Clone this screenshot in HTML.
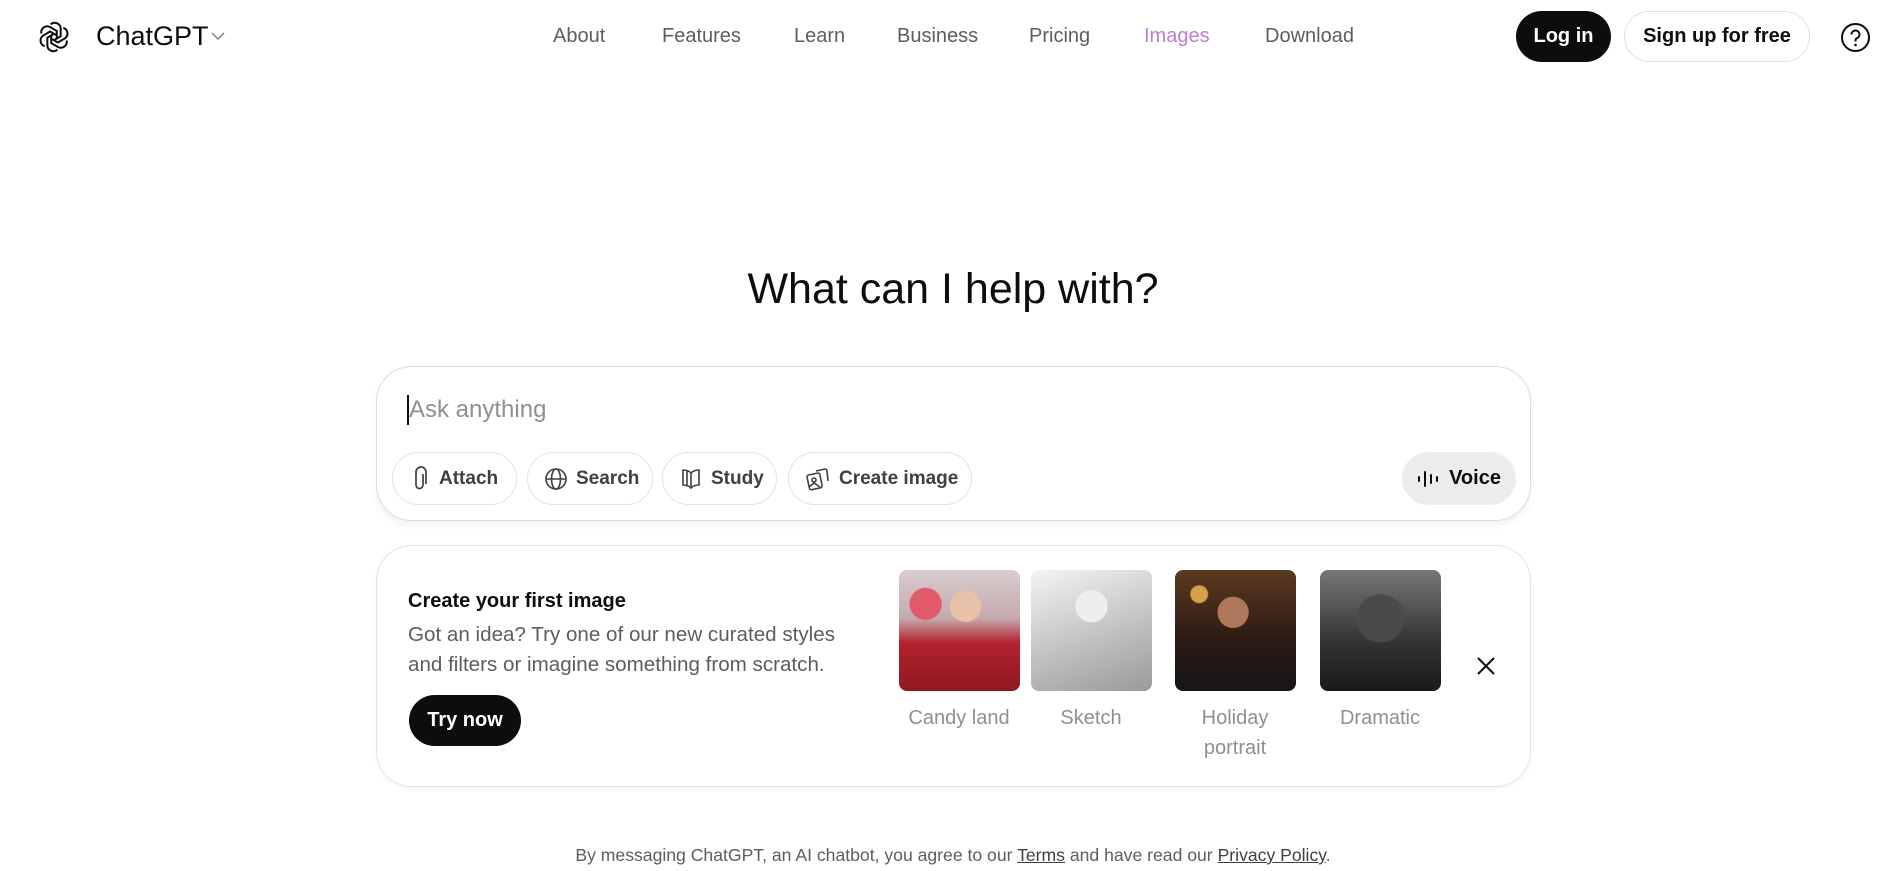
<!DOCTYPE html>
<html><head><meta charset="utf-8">
<style>
*{box-sizing:border-box;margin:0;padding:0}
body{width:1903px;height:871px;background:#fff;font-family:"Liberation Sans",Arial,sans-serif;color:#0d0d0d;position:relative;overflow:hidden}
.a{position:absolute;white-space:nowrap}
.nav{top:25px;font-size:20px;color:#5d5d5d}
.btn{border-radius:30px;display:flex;align-items:center;justify-content:center;font-size:20px;font-weight:bold}
.chip{position:absolute;top:452px;height:53px;border:1px solid #e3e3e3;border-radius:27px;display:flex;align-items:center;gap:8px;padding-left:16px;font-size:19px;font-weight:bold;color:#404040}
.chip svg{flex:none}
.img{position:absolute;top:570px;width:121px;height:121px;border-radius:8px;overflow:hidden}
.lbl{position:absolute;font-size:20px;color:#8f8f8f;text-align:center;width:150px;line-height:30px}
</style></head><body>
<svg class="a" style="left:38px;top:21px" width="32" height="32" viewBox="0 0 24 24" fill="none" stroke="#0d0d0d" stroke-width="1.5"><g transform="translate(12 12)"><g id="p"><path d="M-2.5-9.5a4.5 4.5 0 0 1 7.5 3v6l-4.5 2.6"/></g><use href="#p" transform="rotate(60)"/><use href="#p" transform="rotate(120)"/><use href="#p" transform="rotate(180)"/><use href="#p" transform="rotate(240)"/><use href="#p" transform="rotate(300)"/></g></svg>
<div class="a" style="left:96px;top:21px;font-size:27px;color:#0d0d0d">ChatGPT</div>
<svg class="a" style="left:210px;top:30px" width="16" height="12" viewBox="0 0 16 12"><path d="M2 3l6 6 6-6" stroke="#8f8f8f" stroke-width="1.6" fill="none"/></svg>
<div class="a nav" style="left:553px">About</div>
<div class="a nav" style="left:662px">Features</div>
<div class="a nav" style="left:794px">Learn</div>
<div class="a nav" style="left:897px">Business</div>
<div class="a nav" style="left:1029px">Pricing</div>
<div class="a nav" style="left:1144px;color:#c27ccf">Images</div>
<div class="a nav" style="left:1265px">Download</div>
<div class="a btn" style="left:1516px;top:11px;width:95px;height:51px;background:#0d0d0d;color:#fff">Log in</div>
<div class="a btn" style="left:1624px;top:11px;width:186px;height:51px;border:1px solid #e0e0e0;color:#0d0d0d">Sign up for free</div>
<svg class="a" style="left:1840px;top:22px" width="31" height="31" viewBox="0 0 31 31"><circle cx="15.5" cy="15.5" r="13.5" stroke="#0d0d0d" stroke-width="2" fill="none"/><path d="M11.5 12.5a4 4 0 1 1 5.5 3.7c-1 .5-1.5 1.2-1.5 2.3v1" stroke="#0d0d0d" stroke-width="2" fill="none"/><circle cx="15.5" cy="23" r="1.3" fill="#0d0d0d"/></svg>

<div class="a" style="left:0;width:1906px;top:265px;text-align:center;font-size:43px;color:#0d0d0d">What can I help with?</div>

<div class="a" style="left:376px;top:366px;width:1155px;height:155px;border:1px solid #dcdcdc;border-radius:36px;box-shadow:0 4px 8px rgba(0,0,0,.06)"></div>
<div class="a" style="left:407px;top:395px;width:2px;height:30px;background:#0d0d0d"></div>
<div class="a" style="left:409px;top:396px;font-size:24px;color:#8f8f8f">Ask anything</div>
<div class="chip" style="left:392px;width:125px"><svg width="22" height="26" viewBox="0 0 22 26" fill="none" stroke="#404040" stroke-width="1.7"><path d="M14 8v11a3.5 3.5 0 0 1-7 0V6a5 5 0 0 1 10 0v12"/></svg>Attach</div>
<div class="chip" style="left:527px;width:126px"><svg width="24" height="24" viewBox="0 0 24 24" fill="none" stroke="#404040" stroke-width="1.6"><circle cx="12" cy="12" r="10"/><ellipse cx="12" cy="12" rx="4.5" ry="10"/><path d="M2 12h20"/></svg>Search</div>
<div class="chip" style="left:662px;width:115px"><svg width="24" height="24" viewBox="0 0 24 24" fill="none" stroke="#404040" stroke-width="1.6"><path d="M12 6c-2-2-5-3-8-3v15c3 0 6 1 8 3 2-2 5-3 8-3V3c-3 0-6 1-8 3zM12 6v15M8 4v15"/></svg>Study</div>
<div class="chip" style="left:788px;width:184px"><svg width="26" height="26" viewBox="0 0 26 26" fill="none" stroke="#404040" stroke-width="1.6"><rect x="3" y="8" width="13" height="15" rx="2" transform="rotate(-12 9 15)"/><circle cx="9" cy="14" r="2"/><path d="M4 21l5-4 6 4M11 5l9-2a2 2 0 0 1 2 2l1 10"/></svg>Create image</div>
<div class="a btn" style="left:1402px;top:452px;width:114px;height:53px;background:#ececec;font-size:20px;gap:10px;color:#0d0d0d"><svg width="22" height="20" viewBox="0 0 22 20" stroke="#0d0d0d" stroke-width="2" stroke-linecap="round"><path d="M2 8v4M8 3v14M14 6v8M20 8v4"/></svg>Voice</div>

<div class="a" style="left:376px;top:545px;width:1155px;height:242px;border:1px solid #e3e3e3;border-radius:36px;box-shadow:0 2px 6px rgba(0,0,0,.04)"></div>
<div class="a" style="left:408px;top:590px;font-size:20px;font-weight:bold">Create your first image</div>
<div class="a" style="left:408px;top:620px;font-size:20.6px;color:#5d5d5d;line-height:30px">Got an idea? Try one of our new curated styles<br>and filters or imagine something from scratch.</div>
<div class="a btn" style="left:409px;top:695px;width:112px;height:51px;background:#0d0d0d;color:#fff">Try now</div>
<div class="img" style="left:899px;background:radial-gradient(circle at 55% 30%,#e8c2a8 0 14%,transparent 15%),radial-gradient(circle at 22% 28%,#e25a6a 0 12%,transparent 13%),linear-gradient(180deg,#d9cdd0 0%,#c5a9ac 40%,#b3222f 60%,#8f1820 100%)"></div>
<div class="img" style="left:1031px;background:radial-gradient(circle at 50% 30%,#eee 0 15%,transparent 16%),linear-gradient(160deg,#f4f4f4,#bdbdbd 60%,#9a9a9a)"></div>
<div class="img" style="left:1175px;background:radial-gradient(circle at 48% 35%,#b0785a 0 15%,transparent 16%),radial-gradient(circle at 20% 20%,#d9a04a 0 6%,transparent 7%),linear-gradient(180deg,#5a3a20,#2a1a12 60%,#15151a)"></div>
<div class="img" style="left:1320px;background:radial-gradient(circle at 50% 40%,#4a4a4a 0 25%,transparent 26%),linear-gradient(180deg,#777,#333 60%,#1a1a1a)"></div>
<div class="lbl" style="left:884px;top:703px">Candy land</div>
<div class="lbl" style="left:1016px;top:703px">Sketch</div>
<div class="lbl" style="left:1160px;top:703px">Holiday<br>portrait</div>
<div class="lbl" style="left:1305px;top:703px">Dramatic</div>
<svg class="a" style="left:1476px;top:656px" width="20" height="20" viewBox="0 0 20 20" stroke="#0d0d0d" stroke-width="2"><path d="M2 2l16 16M18 2L2 18"/></svg>

<div class="a" style="left:0;width:1906px;top:845px;text-align:center;font-size:17.6px;color:#5d5d5d">By messaging ChatGPT, an AI chatbot, you agree to our <u style="color:#404040">Terms</u> and have read our <u style="color:#404040">Privacy Policy</u>.</div>
</body></html>
